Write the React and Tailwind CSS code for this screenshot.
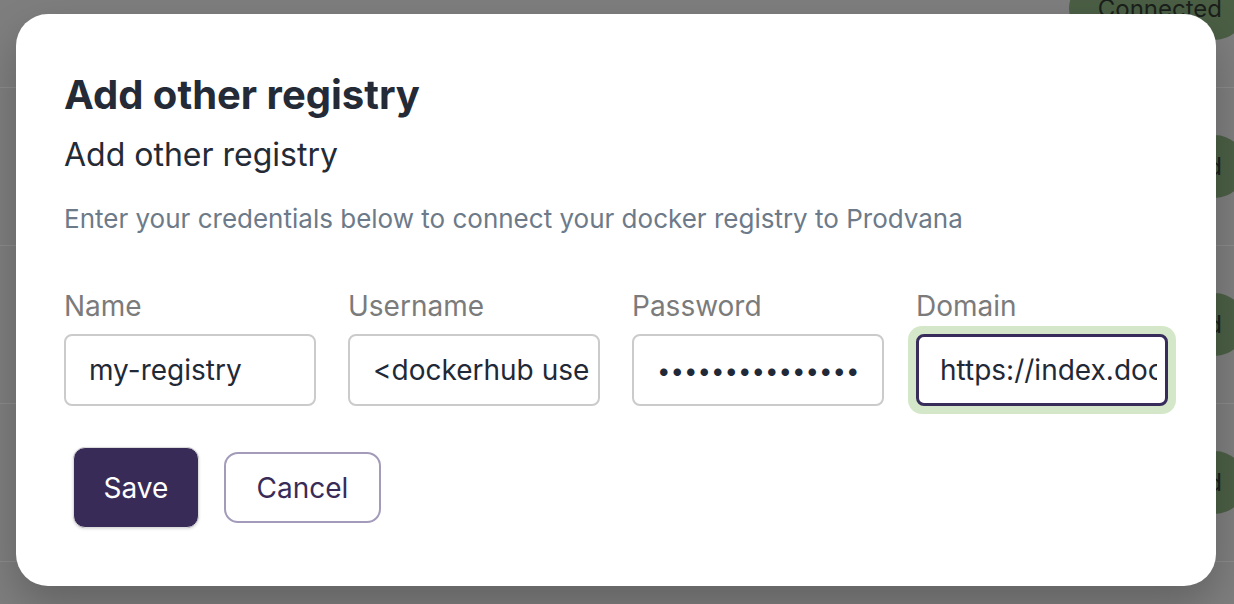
import { useState } from 'react'

const rows = [0, 1, 2, 3]

function Field({ label, value, type = 'text', focused }) {
  return (
    <div className="flex flex-col gap-[12px]">
      <label className="text-[28px] leading-[32px] text-[#7b7b7b]">{label}</label>
      <div className={focused ? '-m-[8px] rounded-[14px] bg-[#d4e8c9] p-[8px]' : ''}>
        <input
          type={type}
          defaultValue={value}
          className={
            'h-[72px] w-[252px] rounded-[8px] bg-white pr-[8px] text-[#1f2937] outline-none ' +
            (type === 'password' ? 'text-[24px] ' : 'text-[28px] ') +
            (focused ? 'border-[3px] border-[#382c5a] pl-[21px]' : 'border-2 border-[#cbcbcb] pl-[23px]')
          }
        />
      </div>
    </div>
  )
}

export default function App() {
  const [open] = useState(true)

  return (
    <div className="relative h-[604px] w-[1234px] overflow-hidden bg-[#7e7e7e] font-['Inter',sans-serif]">
      {/* page behind the overlay */}
      <div className="-mt-[70px] flex flex-col">
        {rows.map((r) => (
          <div key={r} className="flex h-[158px] items-center justify-end border-b border-[#8b8b8b]">
            <span className="-mr-[12px] flex h-[63px] items-center rounded-full bg-[#4b5f45] pl-[29px] pr-[24px] text-[24px] text-[#1b1f1b]">
              Connected
            </span>
          </div>
        ))}
      </div>

      {open && (
        <div className="absolute left-[16px] top-[14px] h-[572px] w-[1200px] rounded-[32px] bg-white pl-[48px] pt-[57px] shadow-[0_18px_40px_rgba(0,0,0,0.22)]">
          <h2 className="text-[40px] font-bold leading-[48px] text-[#242b36]">Add other registry</h2>
          <h3 className="mt-[16px] text-[32px] leading-[40px] text-[#242b36]">Add other registry</h3>
          <p className="mt-[28px] text-[26px] leading-[32px] text-[#6c7a89]">
            Enter your credentials below to connect your docker registry to Prodvana
          </p>

          <div className="mt-[55px] flex gap-[32px]">
            <Field label="Name" value="my-registry" />
            <Field label="Username" value="<dockerhub username>" />
            <Field label="Password" value="•••••••••••••••" type="password" />
            <Field label="Domain" value="https://index.docker.io/v1/" focused />
          </div>

          <div className="mt-[41px] flex items-center gap-[25px] pl-[9px]">
            <button className="h-[81px] w-[126px] rounded-[12px] border border-[#dcdcdc] bg-[#392b58] text-[28px] text-white shadow-[0_1px_3px_rgba(0,0,0,0.15)]">
              Save
            </button>
            <button className="h-[71px] w-[157px] rounded-[14px] border-2 border-[#a39bb9] bg-white text-[28px] text-[#392b58]">
              Cancel
            </button>
          </div>
        </div>
      )}
    </div>
  )
}
